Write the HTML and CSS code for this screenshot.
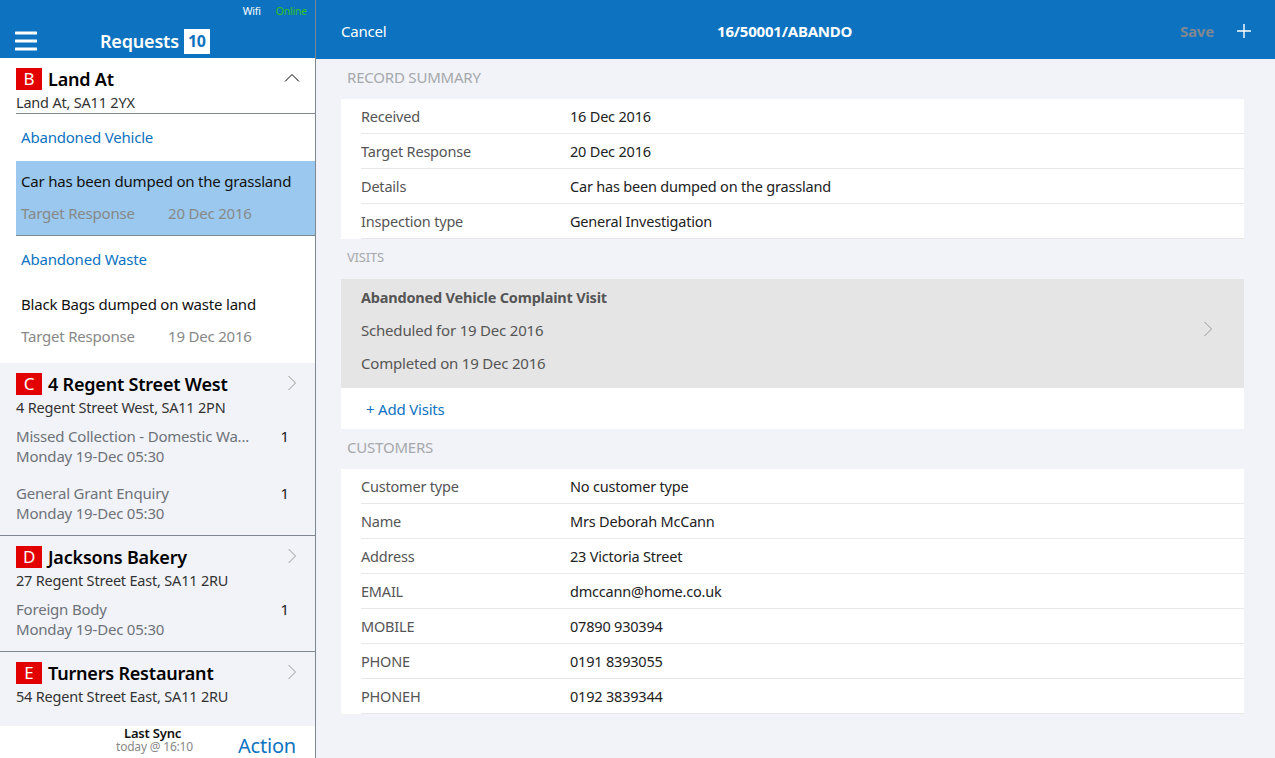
FILE: index.html
```html
<!DOCTYPE html>
<html lang="en">
  <head>
    <meta http-equiv="Content-Type" content="text/html;charset=UTF-8" />
    <meta name="viewport" content="width=device-width, initial-scale=1.0" />
    <title>Requests</title>
    <link rel="stylesheet" href="styles.css">
  </head>
  <body>
    <aside class="sidebar">
      <header class="side-head">
        <div class="status"><span>Wifi</span><span class="online">Online</span></div>
        <div class="side-title">
          <svg class="burger" width="22" height="20" viewBox="0 0 22 20"><path d="M1 2h20M1 10h20M1 18h20" stroke="#fff" stroke-width="3" stroke-linecap="round"/></svg>
          <h1>Requests</h1>
          <span class="count">10</span>
        </div>
      </header>

      <div class="list">
        <section class="group group-open">
          <div class="place place-open">
            <h2><span class="letter">B</span>Land At</h2>
            <svg class="chev" width="16" height="10" viewBox="0 0 16 10"><path d="M1 8.5 8 1.5l7 7" fill="none" stroke="#000" stroke-width="1"/></svg>
            <p>Land At, SA11 2YX</p>
          </div>
          <div class="req-name">Abandoned Vehicle</div>
          <div class="req-detail selected">
            <div class="req-text">Car has been dumped on the grassland</div>
            <div class="req-meta"><span>Target Response</span><span>20 Dec 2016</span></div>
          </div>
          <div class="req-name">Abandoned Waste</div>
          <div class="req-detail">
            <div class="req-text">Black Bags dumped on waste land</div>
            <div class="req-meta"><span>Target Response</span><span>19 Dec 2016</span></div>
          </div>
        </section>

        <section class="group group-c">
          <div class="place">
            <h2><span class="letter">C</span>4 Regent Street West</h2>
            <svg class="chev" width="10" height="16" viewBox="0 0 10 16"><path d="M1.5 1l7 7-7 7" fill="none" stroke="#999" stroke-width="1"/></svg>
            <p>4 Regent Street West, SA11 2PN</p>
          </div>
          <div class="job">
            <div class="job-text"><div class="job-name">Missed Collection - Domestic Wa...</div><div>Monday 19-Dec 05:30</div></div>
            <span class="job-num">1</span>
          </div>
          <div class="job">
            <div class="job-text"><div class="job-name">General Grant Enquiry</div><div>Monday 19-Dec 05:30</div></div>
            <span class="job-num">1</span>
          </div>
        </section>

        <section class="group group-d">
          <div class="place">
            <h2><span class="letter">D</span>Jacksons Bakery</h2>
            <svg class="chev" width="10" height="16" viewBox="0 0 10 16"><path d="M1.5 1l7 7-7 7" fill="none" stroke="#999" stroke-width="1"/></svg>
            <p>27 Regent Street East, SA11 2RU</p>
          </div>
          <div class="job">
            <div class="job-text"><div class="job-name">Foreign Body</div><div>Monday 19-Dec 05:30</div></div>
            <span class="job-num">1</span>
          </div>
        </section>

        <section class="group group-e">
          <div class="place">
            <h2><span class="letter">E</span>Turners Restaurant</h2>
            <svg class="chev" width="10" height="16" viewBox="0 0 10 16"><path d="M1.5 1l7 7-7 7" fill="none" stroke="#999" stroke-width="1"/></svg>
            <p>54 Regent Street East, SA11 2RU</p>
          </div>
        </section>
      </div>

      <footer class="side-foot">
        <div class="sync"><strong>Last Sync</strong><span>today @ 16:10</span></div>
        <a class="action">Action</a>
      </footer>
    </aside>

    <main class="detail">
      <header class="top-bar">
        <a class="cancel">Cancel</a>
        <h1>16/50001/ABANDO</h1>
        <div class="top-actions">
          <span class="save">Save</span>
          <svg width="14" height="14" viewBox="0 0 14 14"><path d="M7 0v14M0 7h14" stroke="#fff" stroke-width="1.4"/></svg>
        </div>
      </header>

      <div class="content">
        <h3 class="sec-title">RECORD SUMMARY</h3>
        <div class="card">
          <div class="row"><span>Received</span><b>16 Dec 2016</b></div>
          <div class="row"><span>Target Response</span><b>20 Dec 2016</b></div>
          <div class="row"><span>Details</span><b>Car has been dumped on the grassland</b></div>
          <div class="row"><span>Inspection type</span><b>General Investigation</b></div>
        </div>

        <h3 class="sec-title sec-small">VISITS</h3>
        <div class="card">
          <div class="visit">
            <strong>Abandoned Vehicle Complaint Visit</strong>
            <div>Scheduled for 19 Dec 2016</div>
            <div>Completed on 19 Dec 2016</div>
            <svg class="visit-chev" width="10" height="16" viewBox="0 0 10 16"><path d="M1.5 1l7 7-7 7" fill="none" stroke="#999" stroke-width="1"/></svg>
          </div>
          <a class="add-visit">+ Add Visits</a>
        </div>

        <h3 class="sec-title">CUSTOMERS</h3>
        <div class="card">
          <div class="row"><span>Customer type</span><b>No customer type</b></div>
          <div class="row"><span>Name</span><b>Mrs Deborah McCann</b></div>
          <div class="row"><span>Address</span><b>23 Victoria Street</b></div>
          <div class="row"><span>EMAIL</span><b>dmccann@home.co.uk</b></div>
          <div class="row"><span>MOBILE</span><b>07890 930394</b></div>
          <div class="row"><span>PHONE</span><b>0191 8393055</b></div>
          <div class="row"><span>PHONEH</span><b>0192 3839344</b></div>
        </div>
      </div>
    </main>
  </body>
</html>
```

FILE: styles.css
```css
* {
  box-sizing: border-box;
}

html, body {
  height: 100%;
}

body {
  margin: 0;
  display: flex;
  height: 758px;
  overflow: hidden;
  font-family: "Noto Sans", "Open Sans", sans-serif;
  font-size: 14px;
  letter-spacing: -0.2px;
  background-color: #f2f3f8;
  color: #333;
}

h1, h2, h3, p {
  margin: 0;
}

/* Left column */
.sidebar {
  width: 316px;
  flex: none;
  display: flex;
  flex-direction: column;
  border-right: 1px solid #7f8790;
}

.side-head {
  height: 58px;
  background: #0d73c1;
  color: #fff;
  flex: none;
}

.status {
  height: 24px;
  display: flex;
  justify-content: flex-end;
  gap: 15px;
  padding: 4px 8px 0 0;
  font-size: 10.5px;
  line-height: 14px;
}

.online {
  color: #2fc21a;
}

.side-title {
  display: flex;
  align-items: center;
  height: 34px;
  padding-left: 15px;
}

.burger {
  flex: none;
}

.side-title h1 {
  margin-left: 63px;
  font-size: 18px;
  font-weight: 600;
}

.count {
  margin-left: 5px;
  width: 26px;
  height: 25px;
  background: #fff;
  color: #0d73c1;
  font-size: 16px;
  font-weight: 700;
  line-height: 25px;
  text-align: center;
}

.list {
  flex: 1;
  min-height: 0;
}

.group {
  background: #f2f3f8;
  border-bottom: 1px solid #7f8790;
}

.group-open {
  height: 305px;
  background: #fff;
  border-bottom: 0;
}

.group-c {
  height: 173px;
}

.group-d {
  height: 116px;
}

.group-e {
  height: 74px;
  border-bottom: 0;
}

.place {
  position: relative;
  padding: 9px 0 0 16px;
  margin-bottom: 9px;
}

.place-open {
  height: 56px;
  margin: 0 0 0 16px;
  padding-left: 0;
  border-bottom: 1px solid #7f8790;
}

.place h2 {
  display: flex;
  align-items: center;
  height: 24px;
  color: #000;
  font-size: 18px;
  font-weight: 600;
}

.letter {
  width: 26px;
  height: 22px;
  margin-right: 6px;
  background: #e30000;
  color: #fff;
  font-size: 17px;
  font-weight: 400;
  line-height: 22px;
  text-align: center;
}

.place p {
  margin-top: 1px;
  line-height: 20px;
  color: #333;
  font-size: 14.5px;
}

.chev {
  position: absolute;
  top: 12px;
  right: 18px;
}

.place-open .chev {
  top: 15px;
  right: 15px;
}

.req-name {
  height: 47px;
  padding: 12px 0 0 21px;
  color: #0d73c1;
  font-size: 15px;
  line-height: 22px;
}

.req-detail {
  height: 75px;
  padding: 9px 0 0 21px;
  font-size: 15px;
  color: #111;
}

.req-detail.selected {
  background: #9ac8ee;
  border-bottom: 1px solid #7f8790;
  margin-left: 16px;
  padding-left: 5px;
}

.req-detail:last-child {
  height: 80px;
  padding-top: 10px;
}

.req-text {
  line-height: 22px;
}

.req-meta {
  display: flex;
  margin-top: 10px;
  line-height: 22px;
  color: #888;
}

.req-meta span:first-child {
  width: 147px;
}

.job {
  display: flex;
  height: 57px;
  padding: 0 26px 0 16px;
  color: #6d7278;
  font-size: 15px;
  line-height: 20px;
}

.job-text {
  flex: 1;
}

.job-num {
  color: #222;
}

/* Sidebar footer */
.side-foot {
  flex: none;
  height: 32px;
  display: flex;
  background: #fff;
  padding-left: 116px;
}

.sync {
  width: 122px;
  display: flex;
  flex-direction: column;
  align-items: flex-start;
  line-height: 14px;
}

.sync strong {
  margin-left: 8px;
  color: #111;
  font-size: 13px;
  font-weight: 600;
}

.sync span {
  color: #888;
  font-size: 12px;
}

.action {
  color: #0d73c1;
  font-size: 20px;
  line-height: 40px;
}

/* Right side */
.detail {
  flex: 1;
  min-width: 0;
}

.top-bar {
  height: 59px;
  background: #0d73c1;
  color: #fff;
  display: flex;
  align-items: center;
  justify-content: space-between;
  padding: 2px 24px 0 25px;
  position: relative;
}

.cancel {
  font-size: 15px;
}

.top-bar h1 {
  position: absolute;
  left: 401px;
  font-size: 15px;
  font-weight: 700;
}

.top-actions {
  display: flex;
  align-items: center;
  gap: 23px;
}

.save {
  color: #7f8790;
  font-size: 15px;
  font-weight: 700;
}

.content {
  padding: 0 31px 0 25px;
}

.sec-title {
  height: 40px;
  padding: 8px 0 0 6px;
  color: #a6a8ac;
  font-size: 15px;
  font-weight: 400;
  line-height: 20px;
}

.sec-small {
  font-size: 13px;
}

.card {
  background: #fff;
}

.row {
  display: flex;
  align-items: center;
  height: 35px;
  margin-left: 20px;
  border-bottom: 1px solid #e8e8e8;
  font-size: 14.5px;
  color: #555;
}

.row span {
  width: 209px;
}

.row b {
  font-weight: 400;
  color: #222;
}

.visit {
  position: relative;
  height: 109px;
  padding: 7px 20px 0;
  background: #e5e5e5;
  color: #555;
  font-size: 15px;
  line-height: 22px;
}

.visit strong {
  display: block;
  font-size: 14.5px;
  font-weight: 700;
  margin-bottom: 11px;
}

.visit div + div {
  margin-top: 11px;
}

.visit-chev {
  position: absolute;
  right: 31px;
  top: 42px;
}

.add-visit {
  display: block;
  height: 41px;
  padding-left: 25px;
  color: #0d73c1;
  font-size: 15px;
  line-height: 42px;
}
```
